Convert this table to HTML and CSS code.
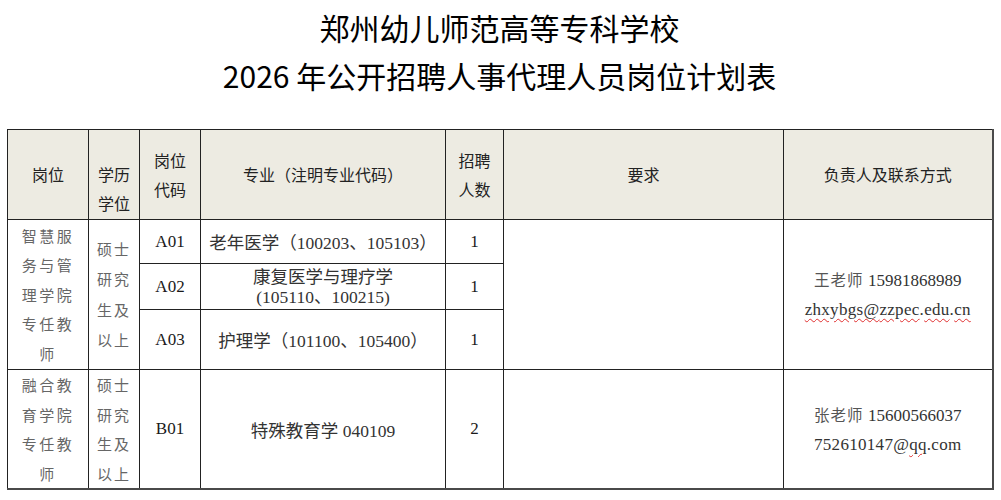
FILE: index.html
```html
<!DOCTYPE html>
<html lang="zh-CN">
<head>
<meta charset="utf-8">
<title>郑州幼儿师范高等专科学校 2026年公开招聘人事代理人员岗位计划表</title>
<link rel="stylesheet" href="styles.css">
</head>
<body>
<div class="page">
  <h1 class="title">郑州幼儿师范高等专科学校</h1>
  <h2 class="title">2026 年公开招聘人事代理人员岗位计划表</h2>
  <table class="plan">
    <colgroup>
      <col class="c1"><col class="c2"><col class="c3"><col class="c4"><col class="c5"><col class="c6"><col class="c7">
    </colgroup>
    <thead>
      <tr class="head">
        <th>岗位</th>
        <th>&nbsp;<br>学历<br>学位</th>
        <th>岗位<br>代码</th>
        <th>专业（注明专业代码）</th>
        <th>招聘<br>人数</th>
        <th>要求</th>
        <th>负责人及联系方式</th>
      </tr>
    </thead>
    <tbody>
      <tr class="r1">
        <td rowspan="3" class="dept">智慧服<br>务与管<br>理学院<br>专任教<br>师</td>
        <td rowspan="3" class="edu">硕士<br>研究<br>生及<br>以上</td>
        <td class="code">A01</td>
        <td class="major">老年医学（100203、105103）</td>
        <td class="num">1</td>
        <td rowspan="3" class="req"></td>
        <td rowspan="3" class="contact">
          <div class="cline"><span class="cn">王老师</span> 15981868989</div>
          <div class="cline mail"><span class="sp">zhxybgs@</span><span class="sp">zzpec</span>.<span class="sp">edu</span>.<span class="sp">cn</span></div>
        </td>
      </tr>
      <tr class="r2">
        <td class="code">A02</td>
        <td class="major two">康复医学与理疗学<br>(105110、100215)</td>
        <td class="num">1</td>
      </tr>
      <tr class="r3">
        <td class="code">A03</td>
        <td class="major">护理学（101100、105400）</td>
        <td class="num">1</td>
      </tr>
      <tr class="r4">
        <td class="dept">融合教<br>育学院<br>专任教<br>师</td>
        <td class="edu tight">硕士<br>研究<br>生及<br>以上</td>
        <td class="code">B01</td>
        <td class="major">特殊教育学 040109</td>
        <td class="num">2</td>
        <td class="req"></td>
        <td class="contact">
          <div class="cline"><span class="cn">张老师</span> 15600566037</div>
          <div class="cline mail">752610147@<span class="sp">qq</span>.com</div>
        </td>
      </tr>
    </tbody>
  </table>
</div>
</body>
</html>
```

FILE: styles.css
```css
html, body {
  margin: 0;
  padding: 0;
  background: #ffffff;
}

.page {
  padding: 3px 9px 0 7px;
  font-family: "Noto Sans CJK SC", "Noto Sans", sans-serif;
  color: #1e1e1e;
}

.title {
  margin: 0;
  text-align: center;
  font-size: 30px;
  line-height: 48px;
  font-weight: 400;
  color: #000000;
  letter-spacing: 0;
}

.plan {
  margin-top: 30px;
  width: 985px;
  table-layout: fixed;
  border-collapse: collapse;
  border-right: 2px solid #4a4a4a;
  border-bottom: 2px solid #4a4a4a;
  border-left: 1px solid #2a2a2a;
  border-top: 1px solid #2a2a2a;
}

.c1 { width: 81px; }
.c2 { width: 51px; }
.c3 { width: 61px; }
.c4 { width: 245px; }
.c5 { width: 58px; }
.c6 { width: 280px; }
.c7 { width: 209px; }

.plan th,
.plan td {
  border: 1px solid #222222;
  padding: 0;
  text-align: center;
  vertical-align: middle;
}

.head th {
  height: 89px;
  background: #edebe2;
  font-size: 16px;
  line-height: 29px;
  font-weight: 400;
  color: #222222;
}

.r1 td { height: 43px; }
.r2 td { height: 45px; }
.r3 td { height: 59px; }
.r4 td { height: 118px; }

.dept {
  font-size: 15px;
  line-height: 29.5px;
  letter-spacing: 2.5px;
  color: #666666;
  padding-left: 2px;
}

.edu {
  font-size: 15px;
  line-height: 30.5px;
  letter-spacing: 2px;
  color: #666666;
  padding-left: 2px;
}

.edu.tight {
  line-height: 29.5px;
}

.code {
  font-family: "Liberation Serif", "Noto Sans CJK SC", serif;
  font-size: 17px;
  color: #1a1a1a;
}

.major {
  font-family: "Liberation Serif", "Noto Sans CJK SC", serif;
  font-size: 17.5px;
  color: #333333;
}

.major.two {
  line-height: 20px;
}

.num {
  font-family: "Liberation Serif", serif;
  font-size: 17px;
  color: #1a1a1a;
}

.contact {
  font-family: "Liberation Serif", "Noto Sans CJK SC", serif;
  font-size: 17px;
  color: #333333;
}

.cline {
  line-height: 29px;
}

.cn {
  font-family: "Noto Sans CJK SC", sans-serif;
  font-size: 15.5px;
  letter-spacing: 1px;
  color: #555555;
}

.mail {
  letter-spacing: 0.3px;
}

.sp {
  text-decoration: underline wavy #e03030;
  text-decoration-thickness: 1px;
  text-underline-offset: 3px;
}
```
